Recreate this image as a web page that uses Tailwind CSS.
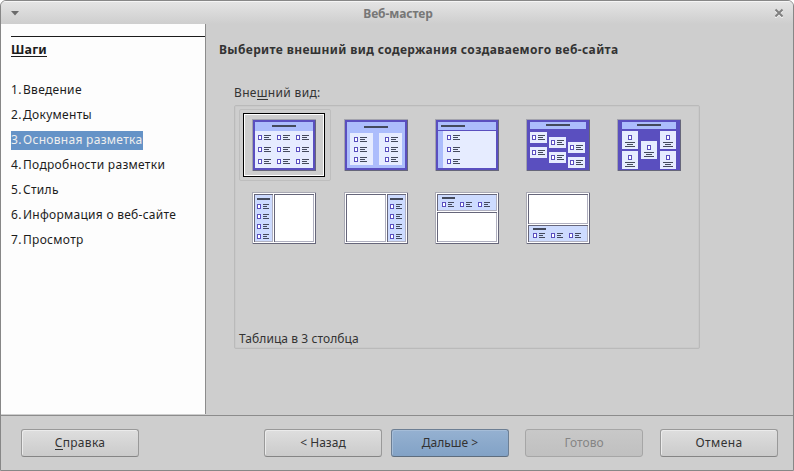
<!DOCTYPE html>
<html lang="ru">
<head>
<meta charset="utf-8">
<title>Веб-мастер</title>
<script src="https://cdn.jsdelivr.net/npm/@tailwindcss/browser@4"></script>
</head>
<body class="w-[794px] h-[471px] overflow-hidden bg-white font-['Noto_Sans',sans-serif] text-[12px] leading-[18px] text-[#333]">

<!-- Shared thumbnail pieces -->
<svg width="0" height="0" class="absolute" shape-rendering="crispEdges">
  <defs>
    <g id="box"><rect width="4" height="5" fill="#5a4fbf"/><rect x="1" y="1" width="2" height="3" fill="#fff"/></g>
    <g id="item"><use href="#box"/><path d="M6 0h7v1h-7zM6 2h5v1h-5zM6 4h7v1h-7z" fill="#444a5c"/></g>
    <g id="small"><use href="#box"/><path d="M6 0h6v1h-6zM6 2h4v1h-4zM6 4h6v1h-6z" fill="#444a5c"/></g>
    <g id="card"><rect width="17" height="11" fill="#e6ecff"/><use href="#item" x="2" y="3"/></g>
    <g id="tall"><rect width="16" height="18" fill="#e6ecff"/><use href="#box" x="6" y="4"/><path d="M3 11h10v1h-10zM5 13h6v1h-6zM3 15h10v1h-10z" fill="#444a5c"/></g>
    <g id="solid"><rect width="64" height="52" fill="#66667a"/><path d="M0 0H64V1H1V52H0z" fill="#a3a3ad"/><rect x="1" y="1" width="62" height="50" fill="#5a4fbf"/></g>
    <g id="frame"><rect width="64" height="52" fill="#66667a"/><path d="M0 0H64V1H1V52H0z" fill="#a9a9b4"/><rect x="1" y="1" width="62" height="50" fill="#fff"/></g>
  </defs>
</svg>

<div class="w-full h-full flex flex-col border border-[#878787] rounded-t-[6px] bg-[#cecece] overflow-hidden">
  <header class="h-[23px] shrink-0 grid grid-cols-[24px_1fr_24px] items-center border-t border-[#f5f5f5] bg-linear-to-b from-[#e4e4e4] to-[#cecece]">
    <svg class="ml-[10px] -mt-px" width="9" height="6" viewBox="0 0 9 6"><path d="M0 1h8L4 5.5z" fill="#6b6b6b"/></svg>
    <div class="text-center font-bold text-[#777] pl-[2px] pt-px tracking-[-0.1px]">Веб-мастер</div>
    <svg class="ml-[5px]" width="10" height="10" viewBox="0 0 10 10"><path d="M1.5 2L8.5 9M8.5 2L1.5 9" transform="translate(0 1)" stroke="#f4f4f4" stroke-width="1.6"/><path d="M1.5 1.5L8.5 8.5M8.5 1.5L1.5 8.5" stroke="#808080" stroke-width="2"/></svg>
  </header>

  <main class="h-[391px] shrink-0 flex">
    <nav class="w-[205px] h-[390px] shrink-0 bg-[#fdfdfd] border-r border-[#8c8c8c] pl-[10px] pt-[12px] text-[#1c1c1c]">
      <div class="h-px bg-[#1c1c1c]"></div>
      <h2 class="mt-[3px] w-fit h-[17px] font-bold text-[12.5px] tracking-[0.2px] leading-[20px] border-b border-[#1c1c1c]">Шаги</h2>
      <ol class="mt-[24px] flex flex-col items-start gap-[6px] leading-[17px] tracking-[0.3px]">
        <li class="flex pb-[2px]"><span class="w-[12px]">1.</span>Введение</li>
        <li class="flex pb-[2px]"><span class="w-[12px]">2.</span>Документы</li>
        <li class="flex pb-[2px] bg-[#6593c7] text-[#eee] pr-px"><span class="w-[12px]">3.</span>Основная разметка</li>
        <li class="flex pb-[2px]"><span class="w-[12px]">4.</span>Подробности разметки</li>
        <li class="flex pb-[2px]"><span class="w-[12px]">5.</span>Стиль</li>
        <li class="flex pb-[2px] tracking-[0.27px]"><span class="w-[12px]">6.</span>Информация о веб-сайте</li>
        <li class="flex pb-[2px]"><span class="w-[12px]">7.</span>Просмотр</li>
      </ol>
    </nav>

    <section class="flex-1 pl-[13px] pt-[17px]">
      <h1 class="font-bold leading-[18px] tracking-[0.36px]">Выберите внешний вид содержания создаваемого веб-сайта</h1>
      <div class="ml-[15px] mt-[25px] h-[21px] tracking-[0.33px]">Вне<span class="inline-block h-[16px] border-b border-[#333]">ш</span>ний вид:</div>
      <div class="ml-[15px] w-[466px] h-[244px] border border-[#bababa] rounded-[2px] shadow-[inset_0_0_0_1px_#c9c9c9] flex flex-col justify-between pl-[4px] pt-[3px]">
        <div class="grid grid-cols-[92px_91px_91px_91px_91px] grid-rows-[73px_71px]">
          <div class="w-[92px] h-[72px] p-[3px] border border-[#bebebe] rounded-[2px]">
            <div class="w-[82px] h-[64px] border border-black"><div class="h-full border border-white pl-[7px] pt-[4px]">
              <svg width="64" height="52" shape-rendering="crispEdges"><use href="#solid"/><rect x="3" y="3" width="58" height="9" fill="#acbdfc"/><rect x="3" y="12" width="58" height="37" fill="#e6ecff"/><rect x="20" y="6" width="24" height="2" fill="#444a5c"/>
                <use href="#item" x="6" y="16"/><use href="#item" x="25" y="16"/><use href="#item" x="44" y="16"/><use href="#item" x="6" y="28"/><use href="#item" x="25" y="28"/><use href="#item" x="44" y="28"/><use href="#item" x="6" y="40"/><use href="#item" x="25" y="40"/><use href="#item" x="44" y="40"/></svg>
            </div></div>
          </div>
          <div class="pl-[13px] pt-[10px]">
            <svg width="64" height="52" shape-rendering="crispEdges"><use href="#solid"/><rect x="3" y="3" width="58" height="46" fill="#acbdfc"/><rect x="20" y="7" width="24" height="2" fill="#444a5c"/><path d="M6 14h23v32H6zM35 14h23v32H35z" fill="#e6ecff"/>
              <use href="#item" x="10" y="18"/><use href="#item" x="10" y="28"/><use href="#item" x="10" y="38"/><use href="#item" x="41" y="18"/><use href="#item" x="41" y="28"/><use href="#item" x="41" y="38"/></svg>
          </div>
          <div class="pl-[13px] pt-[10px]">
            <svg width="64" height="52" shape-rendering="crispEdges"><use href="#solid"/><path d="M3 3h58v8H3zM3 12h5v37H3z" fill="#acbdfc"/><rect x="8" y="12" width="53" height="37" fill="#e6ecff"/><rect x="6" y="6" width="24" height="2" fill="#444a5c"/>
              <use href="#item" x="12" y="16"/><use href="#item" x="12" y="28"/><use href="#item" x="12" y="40"/></svg>
          </div>
          <div class="pl-[13px] pt-[10px]">
            <svg width="64" height="52" shape-rendering="crispEdges"><use href="#solid"/><rect x="4" y="3" width="56" height="7" fill="#acbdfc"/><rect x="20" y="5" width="24" height="2" fill="#444a5c"/>
              <use href="#card" x="4" y="13"/><use href="#card" x="4" y="28"/><use href="#card" x="23" y="18"/><use href="#card" x="23" y="33"/><use href="#card" x="42" y="23"/><use href="#card" x="42" y="38"/></svg>
          </div>
          <div class="pl-[13px] pt-[10px]">
            <svg width="64" height="52" shape-rendering="crispEdges"><use href="#solid"/><rect x="5" y="3" width="54" height="7" fill="#acbdfc"/><rect x="20" y="5" width="24" height="2" fill="#444a5c"/>
              <use href="#tall" x="5" y="12"/><use href="#tall" x="5" y="32"/><use href="#tall" x="24" y="22"/><use href="#tall" x="43" y="12"/><use href="#tall" x="43" y="32"/></svg>
          </div>
          <div class="pl-[13px] pt-[10px]">
            <svg width="64" height="52" shape-rendering="crispEdges"><use href="#frame"/><path d="M2 2h19v48H2zM22 2h40v48H22z" fill="#b0b0c0"/><path d="M2 2h19v1H3v47H2zM22 2h40v1H23v47H22z" fill="#66667a"/><rect x="3" y="3" width="17" height="46" fill="#cddbff"/><rect x="23" y="3" width="38" height="46" fill="#fff"/><rect x="5" y="6" width="13" height="2" fill="#444a5c"/>
              <use href="#small" x="5" y="12"/><use href="#small" x="5" y="22"/><use href="#small" x="5" y="32"/><use href="#small" x="5" y="42"/></svg>
          </div>
          <div class="pl-[13px] pt-[10px]">
            <svg width="64" height="52" shape-rendering="crispEdges"><use href="#frame"/><path d="M2 2h40v48H2zM43 2h19v48H43z" fill="#b0b0c0"/><path d="M2 2h40v1H3v47H2zM43 2h19v1H44v47H43z" fill="#66667a"/><rect x="3" y="3" width="38" height="46" fill="#fff"/><rect x="44" y="3" width="17" height="46" fill="#cddbff"/><rect x="46" y="6" width="13" height="2" fill="#444a5c"/>
              <use href="#small" x="46" y="12"/><use href="#small" x="46" y="22"/><use href="#small" x="46" y="32"/><use href="#small" x="46" y="42"/></svg>
          </div>
          <div class="pl-[13px] pt-[10px]">
            <svg width="64" height="52" shape-rendering="crispEdges"><use href="#frame"/><path d="M2 2h60v17H2zM2 20h60v30H2z" fill="#b0b0c0"/><path d="M2 2h60v1H3v16H2zM2 20h60v1H3v29H2z" fill="#66667a"/><rect x="3" y="3" width="58" height="15" fill="#cddbff"/><rect x="3" y="21" width="58" height="28" fill="#fff"/><rect x="7" y="5" width="13" height="2" fill="#444a5c"/>
              <use href="#small" x="7" y="10"/><use href="#small" x="25" y="10"/><use href="#small" x="43" y="10"/></svg>
          </div>
          <div class="pl-[13px] pt-[10px]">
            <svg width="64" height="52" shape-rendering="crispEdges"><use href="#frame"/><path d="M2 2h60v30H2zM2 33h60v17H2z" fill="#b0b0c0"/><path d="M2 2h60v1H3v29H2zM2 33h60v1H3v16H2z" fill="#66667a"/><rect x="3" y="3" width="58" height="28" fill="#fff"/><rect x="3" y="34" width="58" height="15" fill="#cddbff"/><rect x="7" y="36" width="13" height="2" fill="#444a5c"/>
              <use href="#small" x="7" y="41"/><use href="#small" x="25" y="41"/><use href="#small" x="43" y="41"/></svg>
          </div>
        </div>
        <div class="tracking-[0.08px]">Таблица в 3 столбца</div>
      </div>
    </section>
  </main>

  <footer class="flex-1 border-t border-[#8c8c8c] flex pl-[20px] pt-[13px] text-[#333]">
    <button class="w-[118px] h-[28px] tracking-[0.3px] border border-[#999] border-b-[#858585] rounded-[3px] bg-linear-to-b from-[#dedede] to-[#cbcbcb] shadow-[inset_1px_1px_0_#ebebeb]"><span class="inline-block h-[16px] border-b border-[#333]">С</span>правка</button>
    <button class="ml-[125px] w-[118px] h-[28px] border border-[#999] border-b-[#858585] rounded-[3px] bg-linear-to-b from-[#dedede] to-[#cbcbcb] shadow-[inset_1px_1px_0_#ebebeb]">&lt; Назад</button>
    <button class="ml-[9px] w-[118px] h-[28px] border border-[#6d7f94] border-b-[#5e6d7e] rounded-[3px] bg-linear-to-b from-[#95b1d1] to-[#82a2c6] shadow-[inset_1px_1px_0_#a5bdd8]">Дальше &gt;</button>
    <button class="ml-[16px] w-[118px] h-[28px] border border-[#a6a6a6] rounded-[3px] bg-linear-to-b from-[#c8c8c8] to-[#c0c0c0] text-[#858585]" disabled>Готово</button>
    <button class="ml-[17px] w-[118px] h-[28px] tracking-[0.4px] border border-[#999] border-b-[#858585] rounded-[3px] bg-linear-to-b from-[#dedede] to-[#cbcbcb] shadow-[inset_1px_1px_0_#ebebeb]">Отмена</button>
  </footer>
</div>
</body>
</html>
